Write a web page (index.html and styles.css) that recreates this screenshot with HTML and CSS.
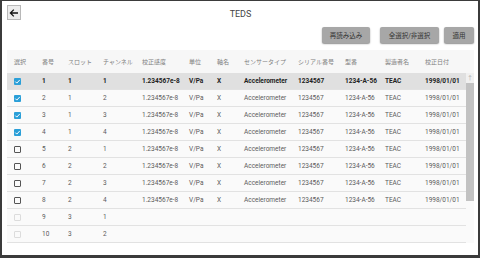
FILE: index.html
```html
<!DOCTYPE html>
<html lang="ja">
<head>
  <meta charset="UTF-8">
  <title>TEDS</title>
  <link rel="stylesheet" href="styles.css">
</head>
<body>
  <div class="window">
    <div class="topbar">
      <button class="back" aria-label="戻る">
        <svg width="10" height="10" viewBox="0 0 10 10"><path d="M9 5H1.5M4.8 1.6L1.4 5l3.4 3.4" fill="none" stroke="#111" stroke-width="1.3"/></svg>
      </button>
      <div class="title">TEDS</div>
    </div>

    <div class="toolbar">
      <button class="btn btn-reload">再読み込み</button>
      <button class="btn btn-all">全選択/非選択</button>
      <button class="btn btn-apply">適用</button>
    </div>

    <div class="table">
      <div class="row head">
        <span>選択</span><span>番号</span><span>スロット</span><span>チャンネル</span><span>校正感度</span><span>単位</span><span>軸名</span><span>センサータイプ</span><span>シリアル番号</span><span>型番</span><span>製造者名</span><span>校正日付</span>
      </div>
      <div class="body">
        <div class="rows">
          <div class="row selected"><span><i class="cb on"></i></span><span>1</span><span>1</span><span>1</span><span>1.234567e-8</span><span>V/Pa</span><span>X</span><span>Accelerometer</span><span>1234567</span><span>1234-A-56</span><span>TEAC</span><span>1998/01/01</span></div>
          <div class="row"><span><i class="cb on"></i></span><span>2</span><span>1</span><span>2</span><span>1.234567e-8</span><span>V/Pa</span><span>X</span><span>Accelerometer</span><span>1234567</span><span>1234-A-56</span><span>TEAC</span><span>1998/01/01</span></div>
          <div class="row"><span><i class="cb on"></i></span><span>3</span><span>1</span><span>3</span><span>1.234567e-8</span><span>V/Pa</span><span>X</span><span>Accelerometer</span><span>1234567</span><span>1234-A-56</span><span>TEAC</span><span>1998/01/01</span></div>
          <div class="row"><span><i class="cb on"></i></span><span>4</span><span>1</span><span>4</span><span>1.234567e-8</span><span>V/Pa</span><span>X</span><span>Accelerometer</span><span>1234567</span><span>1234-A-56</span><span>TEAC</span><span>1998/01/01</span></div>
          <div class="row"><span><i class="cb"></i></span><span>5</span><span>2</span><span>1</span><span>1.234567e-8</span><span>V/Pa</span><span>X</span><span>Accelerometer</span><span>1234567</span><span>1234-A-56</span><span>TEAC</span><span>1998/01/01</span></div>
          <div class="row"><span><i class="cb"></i></span><span>6</span><span>2</span><span>2</span><span>1.234567e-8</span><span>V/Pa</span><span>X</span><span>Accelerometer</span><span>1234567</span><span>1234-A-56</span><span>TEAC</span><span>1998/01/01</span></div>
          <div class="row"><span><i class="cb"></i></span><span>7</span><span>2</span><span>3</span><span>1.234567e-8</span><span>V/Pa</span><span>X</span><span>Accelerometer</span><span>1234567</span><span>1234-A-56</span><span>TEAC</span><span>1998/01/01</span></div>
          <div class="row"><span><i class="cb"></i></span><span>8</span><span>2</span><span>4</span><span>1.234567e-8</span><span>V/Pa</span><span>X</span><span>Accelerometer</span><span>1234567</span><span>1234-A-56</span><span>TEAC</span><span>1998/01/01</span></div>
          <div class="row"><span><i class="cb off"></i></span><span>9</span><span>3</span><span>1</span></div>
          <div class="row"><span><i class="cb off"></i></span><span>10</span><span>3</span><span>2</span></div>
        </div>
        <div class="scrollbar">
          <div class="arrow">↑</div>
          <div class="thumb"></div>
        </div>
      </div>
    </div>
  </div>
</body>
</html>
```

FILE: styles.css
```css
body {
  margin: 0;
  background: #3b3b3b;
  font-family: Roboto, "Noto Sans CJK JP", sans-serif;
  color: #333;
}
.window {
  margin: 1px 2px 0 2px;
  height: 254px;
  background: #ffffff;
  padding: 4px 4px 0 5px;
  box-sizing: border-box;
}
.topbar {
  display: grid;
  grid-template-columns: 1fr auto 1fr;
  align-items: center;
  height: 15px;
}
.back {
  justify-self: start;
  width: 14px;
  height: 15px;
  padding: 0;
  border: 1px solid #b8b8b8;
  background: #ececec;
  display: flex;
  align-items: center;
  justify-content: center;
}
.title {
  font-size: 9px;
  color: #444;
  margin-top: 2px;
}
.toolbar {
  display: flex;
  justify-content: flex-end;
  margin-top: 7px;
  height: 16px;
}
.btn {
  height: 16px;
  padding: 0;
  border: none;
  border-radius: 2px;
  background: #a7a7a7;
  box-shadow: 0 1px 1.5px rgba(0, 0, 0, 0.45);
  font-family: Roboto, "Noto Sans CJK JP", sans-serif;
  font-size: 6.5px;
  color: #333;
}
.btn-reload { width: 48px; }
.btn-all { width: 59px; margin-left: 10px; }
.btn-apply { width: 30px; margin-left: 5px; }
.table {
  margin-top: 7px;
  background: #fafafa;
}
.row {
  display: grid;
  grid-template-columns: 28px 26px 35px 39px 47px 28px 27px 54px 47px 40px 40px 1fr;
  align-items: center;
  padding-left: 7px;
  height: 17px;
  box-sizing: border-box;
  border-bottom: 1px solid #e2e2e2;
  font-size: 6.5px;
  font-weight: 400;
  color: #5a5a5a;
  white-space: nowrap;
}
.row.head {
  height: 23px;
  border-bottom: none;
  background: #f7f7f7;
  color: #808080;
  font-size: 6px;
}
.row.selected {
  background: #e0e0e0;
  font-weight: bold;
  color: #222;
}
.body {
  display: flex;
}
.rows {
  flex: 1;
}
.scrollbar {
  width: 8px;
  background: #ffffff;
  align-self: flex-start;
}
.arrow {
  height: 10px;
  background: #f0f0f0;
  color: #aaa;
  font-size: 6px;
  text-align: center;
  line-height: 10px;
}
.thumb {
  height: 118px;
  background: #c2c2c2;
}
.cb {
  display: block;
  width: 7px;
  height: 7px;
  box-sizing: border-box;
  border: 1px solid #555;
  border-radius: 1px;
}
.cb.on {
  border: none;
  background: #2a9fd8 url("data:image/svg+xml,%3Csvg xmlns='http://www.w3.org/2000/svg' viewBox='0 0 7 7'%3E%3Cpath d='M1.3 3.6l1.5 1.5 3-3.2' fill='none' stroke='white' stroke-width='1'/%3E%3C/svg%3E") no-repeat center / 7px 7px;
}
.cb.off {
  border-color: #dcdcdc;
}
```
